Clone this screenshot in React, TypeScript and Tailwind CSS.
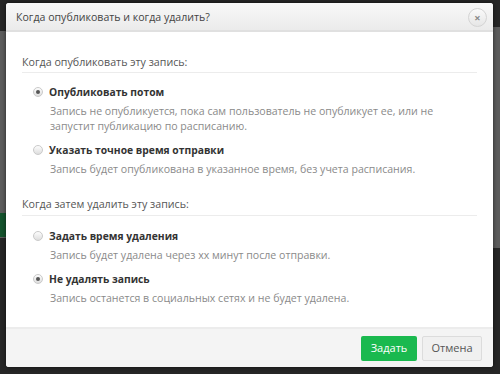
import React from "react";

function Radio({ checked }: { checked?: boolean }) {
  return (
    <span className="flex h-[10px] w-[10px] shrink-0 items-center justify-center rounded-full border border-[#cacaca] bg-gradient-to-b from-[#fdfdfd] to-[#dedede]">
      {checked && <span className="h-[4px] w-[4px] rounded-full bg-[#555]" />}
    </span>
  );
}

function Option({ checked, title, desc }: { checked?: boolean; title: string; desc: React.ReactNode }) {
  return (
    <div className="flex flex-col gap-[4px]">
      <div className="flex h-[16px] items-center gap-[6px] pl-[27px]">
        <Radio checked={checked} />
        <span className="text-[10.3px] font-bold leading-[16px] text-[#333]">{title}</span>
      </div>
      <div className="pl-[44px] text-[10.6px] leading-[15px] text-[#8a8a8a]">{desc}</div>
    </div>
  );
}

export default function App() {
  return (
    <div
      className="relative h-[374px] w-[500px] overflow-hidden bg-[#262626]"
      style={{ fontFamily: '"Open Sans", "Noto Sans", sans-serif' }}
    >
      {/* dimmed underlying page */}
      <div className="absolute left-0 top-[31px] h-[207px] w-[8px] bg-[#5c5c5c]" />
      <div className="absolute left-0 top-[213px] h-[24px] w-[8px] bg-[#14532d]" />
      <div className="absolute right-0 top-[27px] h-[221px] w-[10px] bg-[#5c5c5c]" />

      {/* modal */}
      <div className="absolute left-[6px] top-[3px] flex h-[364px] w-[487px] flex-col overflow-hidden rounded-[3px] bg-white shadow-[0_0_4px_rgba(0,0,0,0.6)]">
        <div className="flex h-[29px] shrink-0 items-center justify-between border-b-[2px] border-[#e0e0e0] bg-gradient-to-b from-[#f8f8f8] to-[#ebebeb] pl-[10px] pr-[6px]">
          <span className="pt-[2px] text-[10.6px] text-[#444]">Когда опубликовать и когда удалить?</span>
          <span className="mt-[2px] flex h-[19px] w-[19px] items-center justify-center rounded-full border border-[#d4d4d4] bg-gradient-to-b from-[#fafafa] to-[#e6e6e6] text-[11px] font-bold leading-none text-[#888]">
            ×
          </span>
        </div>

        <div className="flex flex-1 flex-col pt-[22px]">
          <div className="mx-[16px] border-b border-[#ececec] pb-[2px] text-[10.7px] leading-[16px] text-[#555]">
            Когда опубликовать эту запись:
          </div>
          <div className="mt-[11px] flex flex-col gap-[8px]">
            <Option
              checked
              title="Опубликовать потом"
              desc={
                <>
                  Запись не опубликуется, пока сам пользователь не опубликует ее, или не
                  <br />
                  запустит публикацию по расписанию.
                </>
              }
            />
            <Option title="Указать точное время отправки" desc="Запись будет опубликована в указанное время, без учета расписания." />
          </div>

          <div className="mx-[16px] mt-[19px] border-b border-[#ececec] pb-[3px] text-[10.7px] leading-[16px] text-[#555]">
            Когда затем удалить эту запись:
          </div>
          <div className="mt-[12px] flex flex-col gap-[8px]">
            <Option title="Задать время удаления" desc="Запись будет удалена через xx минут после отправки." />
            <Option checked title="Не удалять запись" desc="Запись останется в социальных сетях и не будет удалена." />
          </div>
        </div>

        <div className="flex h-[40px] shrink-0 items-center justify-end gap-[5px] border-t-[2px] border-[#ececec] bg-[#f4f4f4] pr-[11px]">
          <span className="flex h-[25px] w-[56px] items-center justify-center rounded-[2px] bg-[#1ab94f] text-[11px] text-white">
            Задать
          </span>
          <span className="flex h-[25px] w-[60px] items-center justify-center rounded-[2px] border border-[#dcdcdc] bg-[#f0f0f0] text-[11px] text-[#555]">
            Отмена
          </span>
        </div>
      </div>
    </div>
  );
}
